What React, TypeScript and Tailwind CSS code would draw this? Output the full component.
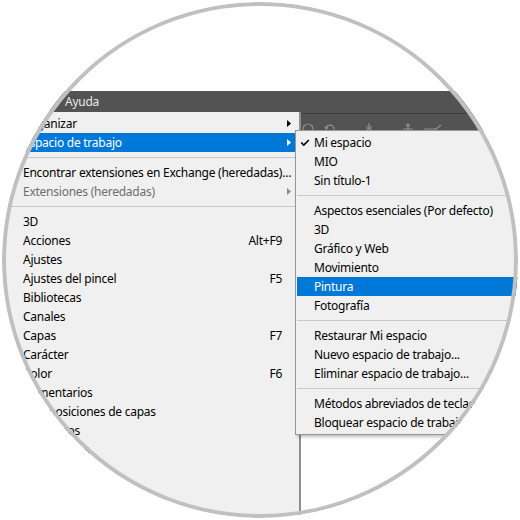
import { Check } from 'lucide-react';

type Entry =
  | { sep: true }
  | { label: string; shortcut?: string; sub?: boolean; active?: boolean; disabled?: boolean; checked?: boolean; sep?: false };

const windowMenu: Entry[] = [
  { label: 'Organizar', sub: true },
  { label: 'Espacio de trabajo', sub: true, active: true },
  { sep: true },
  { label: 'Encontrar extensiones en Exchange (heredadas)...' },
  { label: 'Extensiones (heredadas)', sub: true, disabled: true },
  { sep: true },
  { label: '3D' },
  { label: 'Acciones', shortcut: 'Alt+F9' },
  { label: 'Ajustes' },
  { label: 'Ajustes del pincel', shortcut: 'F5' },
  { label: 'Bibliotecas' },
  { label: 'Canales' },
  { label: 'Capas', shortcut: 'F7' },
  { label: 'Carácter' },
  { label: 'Color', shortcut: 'F6' },
  { label: 'Comentarios' },
  { label: 'Composiciones de capas' },
  { label: 'Contornos' },
  { label: 'Degradados' },
  { label: 'Estilos' },
  { label: 'Estilos de carácter' },
];

const workspaceMenu: Entry[] = [
  { label: 'Mi espacio', checked: true },
  { label: 'MIO' },
  { label: 'Sin título-1' },
  { sep: true },
  { label: 'Aspectos esenciales (Por defecto)' },
  { label: '3D' },
  { label: 'Gráfico y Web' },
  { label: 'Movimiento' },
  { label: 'Pintura', active: true },
  { label: 'Fotografía' },
  { sep: true },
  { label: 'Restaurar Mi espacio' },
  { label: 'Nuevo espacio de trabajo...' },
  { label: 'Eliminar espacio de trabajo...' },
  { sep: true },
  { label: 'Métodos abreviados de teclado y menús...' },
  { label: 'Bloquear espacio de trabajo' },
];

const Arrow = ({ color }: { color: string }) => (
  <svg width="4" height="7" viewBox="0 0 4 7" className="ml-[5px]">
    <path d="M0 0L4 3.5L0 7Z" fill={color} />
  </svg>
);

const MainMenu = () => (
  <div className="absolute left-0 top-[110px] bottom-0 w-[299px] bg-[#f0f0f0] border-r-2 border-[#8e8e8e] pt-[2px]">
    {windowMenu.map((item, i) =>
      item.sep ? (
        <div key={i} className="py-[5px] mx-[2px]">
          <div className="h-px bg-[#c8c8c8]" />
        </div>
      ) : (
        <div
          key={i}
          className={`mx-[2px] h-[19px] flex items-center pl-[19px] ${
            item.active ? 'bg-[#0078d7] text-white' : item.disabled ? 'text-[#6d6d6d]' : 'text-black'
          }`}
        >
          <span className="flex-1 whitespace-nowrap">{item.label}</span>
          {item.shortcut && <span>{item.shortcut}</span>}
          <span className="w-[15px] flex items-center">
            {item.sub && (
              <Arrow color={item.active ? '#ffffff' : item.disabled ? '#8a8a8a' : '#000000'} />
            )}
          </span>
        </div>
      )
    )}
  </div>
);

const WorkspaceMenu = () => (
  <div className="absolute left-[293px] top-[128px] w-[250px] bg-[#f0f0f0] border border-[#979797] py-[2px] shadow-[2px_2px_3px_rgba(0,0,0,0.25)]">
    {workspaceMenu.map((item, i) =>
      item.sep ? (
        <div key={i} className="py-[5px] mx-[1px]">
          <div className="h-px bg-[#c8c8c8]" />
        </div>
      ) : (
        <div
          key={i}
          className={`mx-[1px] h-[19px] flex items-center ${
            item.active ? 'bg-[#0078d7] text-white' : 'text-black'
          }`}
        >
          <span className="w-[17px] flex items-center pl-[3px]">
            {item.checked && <Check className="w-[10px] h-[10px]" strokeWidth={4} />}
          </span>
          <span className="whitespace-nowrap">{item.label}</span>
        </div>
      )
    )}
  </div>
);

// options bar icons, mostly hidden under the submenu
const ToolIcons = () => (
  <div className="flex items-start gap-[10px] pl-[300px] pt-[9px]">
    <svg width="12" height="12" viewBox="0 0 12 12" fill="none" stroke="#8f8f8f" strokeWidth="1.2">
      <circle cx="6" cy="6" r="5" />
    </svg>
    <svg width="12" height="12" viewBox="0 0 12 12" fill="none" stroke="#8f8f8f" strokeWidth="1.2">
      <path d="M2 6a4 4 0 1 1 1.2 2.9" />
      <path d="M1 3.5L2 6L4 4.5" />
    </svg>
    <span className="w-[8px]" />
    <svg width="10" height="12" viewBox="0 0 10 12" fill="none" stroke="#8f8f8f" strokeWidth="1.2">
      <path d="M5 0v12M2 4h6" />
      <circle cx="5" cy="8" r="2.5" />
    </svg>
    <span className="w-[8px]" />
    <svg width="12" height="12" viewBox="0 0 12 12" fill="none" stroke="#8f8f8f" strokeWidth="1.2">
      <path d="M6 1v10M1 6h10M4 3l2-2 2 2" />
    </svg>
    <svg width="18" height="12" viewBox="0 0 18 12" fill="none" stroke="#8f8f8f" strokeWidth="1.2">
      <path d="M1 6h10v5H1zM11 7l6-5" />
    </svg>
  </div>
);

export default function App() {
  return (
    <div className="w-[520px] h-[520px] bg-white flex items-center justify-center font-['Noto_Sans','Open_Sans',sans-serif] text-[12px] leading-none tracking-[-0.25px]">
      <div className="relative w-[516px] h-[516px] rounded-full overflow-hidden bg-white">
        <div className="flex flex-col h-full">
          <div className="h-[89px] shrink-0" />
          <div className="h-[22px] shrink-0 bg-[#535353] flex items-center pl-[63px] text-[#e8e8e8]">
            Ayuda
          </div>
          <div className="h-px shrink-0 bg-[#3c3c3c]" />
          <div className="h-[18px] shrink-0 bg-[#535353] overflow-hidden">
            <ToolIcons />
          </div>
          <div className="flex-1 bg-white" />
        </div>
        <MainMenu />
        <WorkspaceMenu />
        <div className="absolute inset-0 rounded-full border-4 border-[#c0c0c0]" />
      </div>
    </div>
  );
}
